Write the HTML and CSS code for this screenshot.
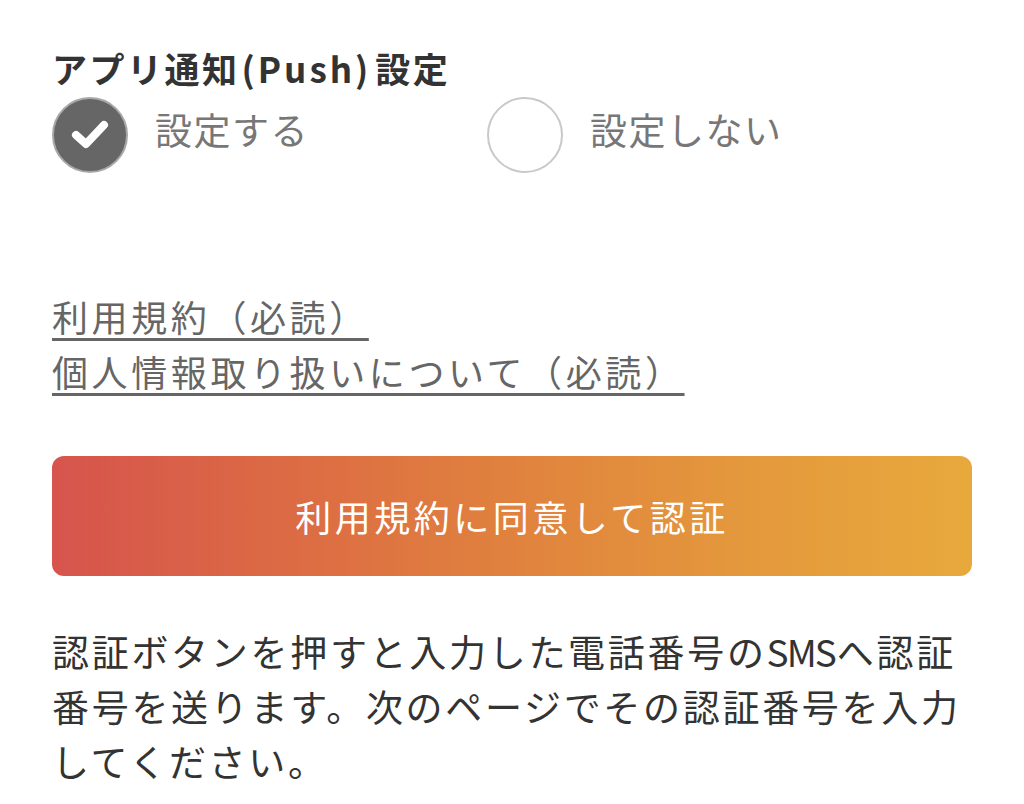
FILE: index.html
```html
<!DOCTYPE html>
<html lang="ja">
<head>
<meta charset="utf-8">
<title>アプリ通知設定</title>
<link rel="stylesheet" href="styles.css">
</head>
<body>
<main class="page">
  <h2 class="title">アプリ通知<span class="paren">(Push)</span>設定</h2>
  <div class="radios">
    <label class="option">
      <span class="circle checked">
        <svg viewBox="0 0 76 76" width="76" height="76" aria-hidden="true">
          <path d="M24 38 L34 47 L52 28" fill="none" stroke="#fff" stroke-width="8" stroke-linecap="round" stroke-linejoin="round"/>
        </svg>
      </span>
      <span class="opt-label">設定する</span>
    </label>
    <label class="option">
      <span class="circle"></span>
      <span class="opt-label">設定しない</span>
    </label>
  </div>
  <div class="links">
    <a class="link" href="#">利用規約（必読）</a>
    <a class="link" href="#">個人情報取り扱いについて（必読）</a>
  </div>
  <button class="agree" type="button">利用規約に同意して認証</button>
  <p class="note"><span class="line">認証ボタンを押すと入力した電話番号の<span class="latin">SMS</span>へ認証</span><span class="line">番号を送ります。次のページでその認証番号を入力</span><span class="line">してください。</span></p>
</main>
</body>
</html>
```

FILE: styles.css
```css
html, body {
  margin: 0;
  padding: 0;
  background: #fff;
}
body {
  font-family: "Noto Sans CJK JP", "Noto Sans", sans-serif;
  color: #333;
}
.page {
  padding: 48px 52px 0 52px;
  display: flex;
  flex-direction: column;
  align-items: flex-start;
}
.title {
  margin: 0;
  font-size: 35px;
  line-height: 40px;
  font-weight: 700;
  letter-spacing: 2.5px;
  color: #333;
}
.paren {
  margin: 0 4px 0 2px;
  letter-spacing: 3px;
}
.radios {
  margin-top: 9px;
  display: flex;
  width: 100%;
}
.option {
  display: flex;
  align-items: center;
  gap: 27px;
  min-width: 435px;
}
.circle {
  box-sizing: border-box;
  width: 76px;
  height: 76px;
  border-radius: 50%;
  border: 2px solid #c9c9c9;
  background: #fff;
  display: flex;
  align-items: center;
  justify-content: center;
  flex: none;
}
.circle.checked {
  background: #666;
  border-color: #a8a8a8;
}
.circle svg {
  display: block;
  flex: none;
}
.opt-label {
  font-size: 37px;
  line-height: 50px;
  letter-spacing: 1.5px;
  color: #777;
  font-weight: 400;
  padding-bottom: 12px;
}
.links {
  margin-top: 116px;
  display: flex;
  flex-direction: column;
  align-items: flex-start;
}
.link {
  font-size: 36px;
  line-height: 55px;
  letter-spacing: 3.6px;
  color: #666;
  text-decoration: underline;
  text-decoration-thickness: 3px;
  text-underline-offset: 6px;
  text-decoration-color: #666;
}
.agree {
  margin-top: 57px;
  width: 100%;
  height: 120px;
  border: none;
  border-radius: 12px;
  background: linear-gradient(90deg, #d6544d 0%, #dc6a44 25%, #e0823e 50%, #e4983c 75%, #e8a93c 100%);
  color: #fff;
  font-family: "Noto Sans CJK JP", "Noto Sans", sans-serif;
  font-size: 36px;
  letter-spacing: 3.5px;
  padding: 0;
}
.note {
  margin: 48px 0 0 0;
  font-size: 37px;
  line-height: 55px;
  letter-spacing: 2.7px;
  color: #333;
  display: flex;
  flex-direction: column;
}
.line {
  white-space: nowrap;
}
.latin {
  letter-spacing: -2px;
  margin: 0 2px 0 0;
}
```
